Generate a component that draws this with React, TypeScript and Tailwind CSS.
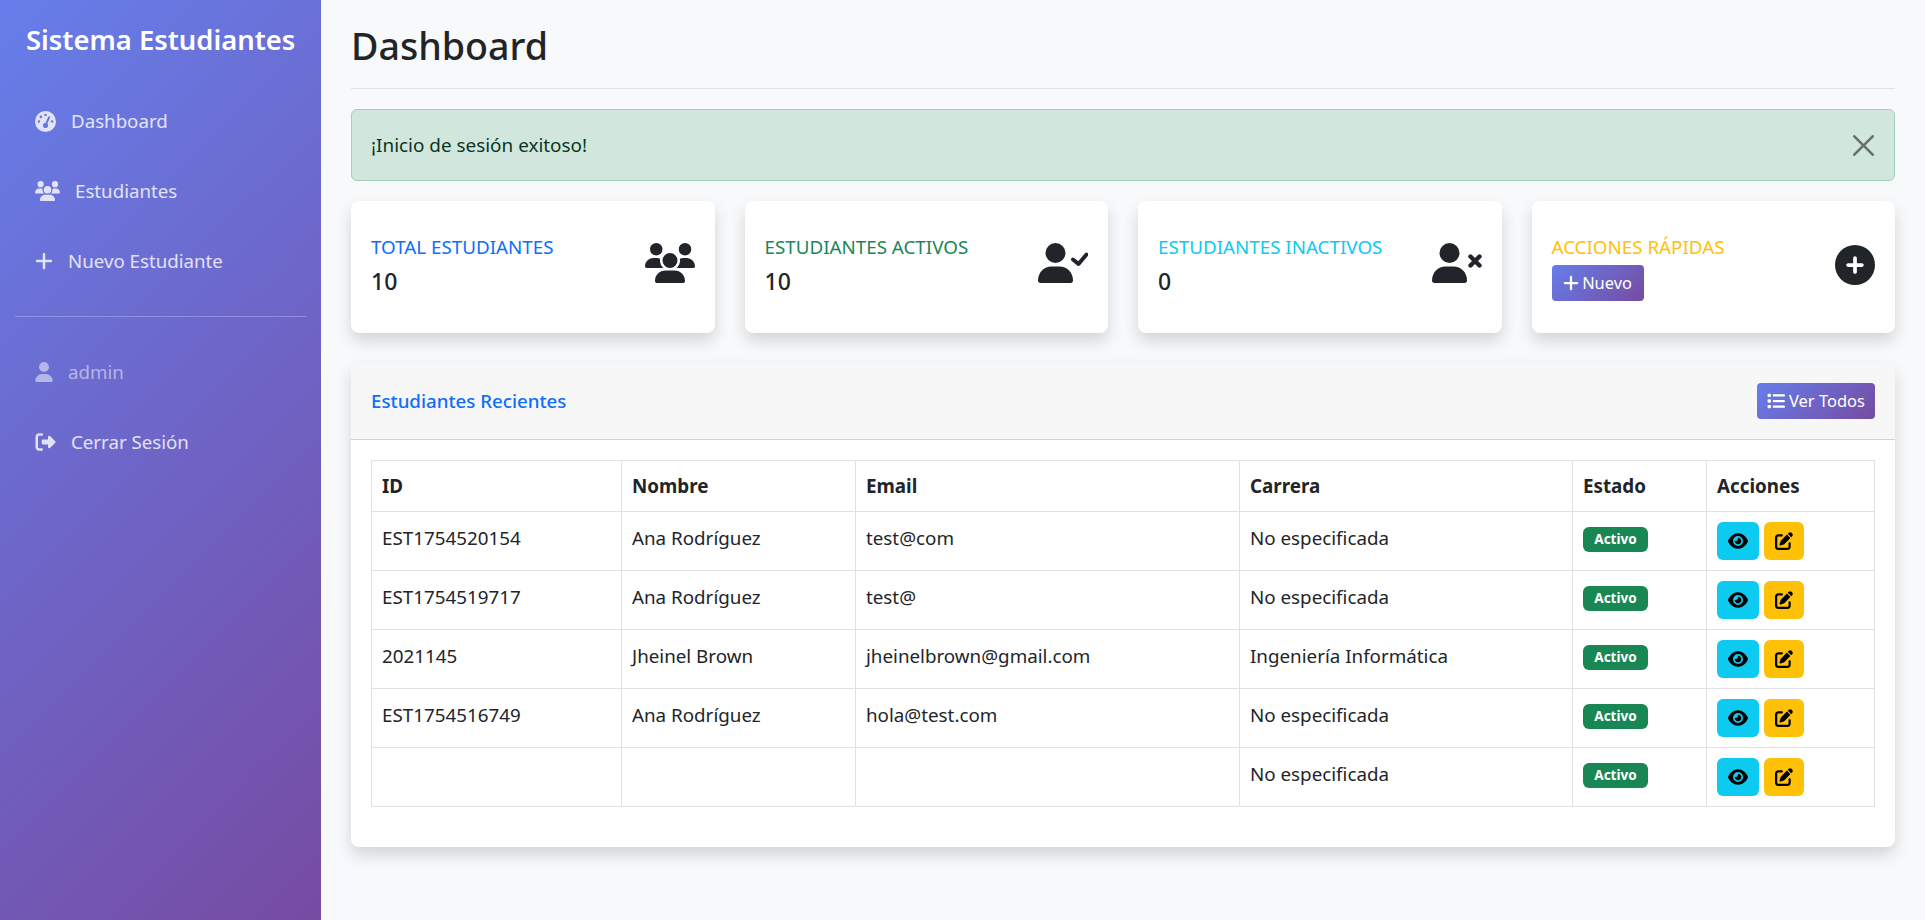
import React from "react";
import {
  FaGaugeHigh,
  FaUsers,
  FaPlus,
  FaUser,
  FaRightFromBracket,
  FaCirclePlus,
  FaList,
  FaEye,
  FaPenToSquare,
} from "react-icons/fa6";

const gradient = "bg-[linear-gradient(135deg,#667eea_0%,#764ba2_100%)]";

const students = [
  { id: "EST1754520154", name: "Ana Rodríguez", email: "test@com", career: "No especificada" },
  { id: "EST1754519717", name: "Ana Rodríguez", email: "test@", career: "No especificada" },
  { id: "2021145", name: "Jheinel Brown", email: "jheinelbrown@gmail.com", career: "Ingeniería Informática" },
  { id: "EST1754516749", name: "Ana Rodríguez", email: "hola@test.com", career: "No especificada" },
  { id: "", name: "", email: "", career: "No especificada" },
];

// person with a separated head and a small mark beside it
const PersonIcon: React.FC<{ children: React.ReactNode }> = ({ children }) => (
  <svg viewBox="0 0 50 40" className="w-[50px] h-[40px] mb-[8px]" fill="currentColor">
    <circle cx="17.5" cy="10" r="10" />
    <path d="M0 37.5C0 29.5 6 23.5 13.5 23.5h8C29 23.5 35 29.5 35 37.5c0 1.5-1 2.5-2.5 2.5h-30C1 40 0 39 0 37.5z" />
    {children}
  </svg>
);

const NavItem: React.FC<{
  icon: React.ReactNode;
  label: string;
  muted?: boolean;
}> = ({ icon, label, muted = false }) => (
  <a
    className={`flex items-center h-[70px] pl-[35px] gap-[15px] text-[18.7px] ${
      muted ? "text-white/50" : "text-white/80"
    }`}
  >
    {icon}
    <span>{label}</span>
  </a>
);

const StatCard: React.FC<{
  title: string;
  color: string;
  value?: string;
  icon: React.ReactNode;
  children?: React.ReactNode;
}> = ({ title, color, value, icon, children }) => (
  <div className="h-[132px] bg-white rounded-[8px] shadow-[0_8px_16px_rgba(0,0,0,0.15)] px-[20px] flex items-center justify-between">
    <div className="self-start pt-[32px]">
      <div className={`text-[18.8px] leading-[28px] mb-[4px] ${color}`}>{title}</div>
      {value && <div className="text-[23px] leading-[32px] font-medium text-[#212529]">{value}</div>}
      {children}
    </div>
    <div className="text-[#212529]">{icon}</div>
  </div>
);

export default function App() {
  return (
    <div className="flex min-h-[920px] bg-[#f8f9fa] font-['Noto_Sans',sans-serif] text-[#212529]">
      <aside className={`w-[321px] shrink-0 ${gradient}`}>
        <h4 className="h-[80px] pl-[26px] flex items-center text-[27.4px] font-semibold text-white">
          Sistema Estudiantes
        </h4>
        <nav className="pt-[6px]">
          <NavItem icon={<FaGaugeHigh className="w-[21px] h-[21px]" />} label="Dashboard" />
          <NavItem icon={<FaUsers className="w-[25px] h-[20px]" />} label="Estudiantes" />
          <NavItem icon={<FaPlus className="w-[18px] h-[20px]" />} label="Nuevo Estudiante" />
        </nav>
        <div className="mx-[15px] mt-[20px] mb-[20px] border-t border-white/25" />
        <NavItem muted icon={<FaUser className="w-[18px] h-[20px]" />} label="admin" />
        <NavItem icon={<FaRightFromBracket className="w-[21px] h-[20px]" />} label="Cerrar Sesión" />
      </aside>

      <main className="flex-1 pl-[30px] pr-[31px]">
        <div className="h-[89px] border-b border-[#dee2e6] flex items-center pt-[3px]">
          <h1 className="text-[37.6px] font-medium leading-[48px]">Dashboard</h1>
        </div>

        <div className="mt-[20px] h-[72px] rounded-[6px] bg-[#d1e7dd] border border-[#a3cfbb] text-[#0a3622] text-[18.9px] flex items-center justify-between pl-[19px] pr-[20px]">
          <span>¡Inicio de sesión exitoso!</span>
          <svg viewBox="0 0 16 16" className="w-[21px] h-[21px] fill-black opacity-50">
            <path d="M.293.293a1 1 0 0 1 1.414 0L8 6.586 14.293.293a1 1 0 1 1 1.414 1.414L9.414 8l6.293 6.293a1 1 0 0 1-1.414 1.414L8 9.414l-6.293 6.293a1 1 0 0 1-1.414-1.414L6.586 8 .293 1.707a1 1 0 0 1 0-1.414z" />
          </svg>
        </div>

        <div className="grid grid-cols-4 gap-[30px] mt-[20px]">
          <StatCard title="TOTAL ESTUDIANTES" color="text-[#0d6efd]" value="10" icon={<FaUsers className="w-[50px] h-[40px] mb-[8px]" />} />
          <StatCard
            title="ESTUDIANTES ACTIVOS"
            color="text-[#198754]"
            value="10"
            icon={
              <PersonIcon>
                <path d="M35 16.5l5.5 4.5L48.5 11.5" fill="none" stroke="currentColor" strokeWidth="4" strokeLinecap="round" strokeLinejoin="round" />
              </PersonIcon>
            }
          />
          <StatCard
            title="ESTUDIANTES INACTIVOS"
            color="text-[#0dcaf0]"
            value="0"
            icon={
              <PersonIcon>
                <path d="M38.5 13.5l9 9M47.5 13.5l-9 9" fill="none" stroke="currentColor" strokeWidth="4.4" strokeLinecap="round" />
              </PersonIcon>
            }
          />
          <StatCard title="ACCIONES RÁPIDAS" color="text-[#ffc107]" icon={<FaCirclePlus className="w-[40px] h-[40px] mb-[4px]" />}>
            <button className={`mt-[2px] h-[36px] w-[92px] rounded-[4px] text-white text-[16.4px] flex items-center justify-center gap-[3px] ${gradient}`}>
              <FaPlus className="w-[16px] h-[18px]" />
              Nuevo
            </button>
          </StatCard>
        </div>

        <section className="mt-[30px] h-[484px] bg-white rounded-[8px] shadow-[0_8px_16px_rgba(0,0,0,0.15)]">
          <header className="h-[77px] rounded-t-[8px] bg-[#f7f7f8] border-b border-[#d2d3d4] flex items-center justify-between px-[20px]">
            <h6 className="text-[18.7px] font-medium text-[#0d6efd]">Estudiantes Recientes</h6>
            <button className={`h-[36px] w-[118px] rounded-[4px] text-white text-[16.5px] flex items-center justify-center gap-[4px] ${gradient}`}>
              <FaList className="w-[18px] h-[18px]" />
              Ver Todos
            </button>
          </header>
          <div className="p-[20px]">
            <table className="w-[1503px] table-fixed border-collapse text-[18.8px]">
              <colgroup>
                <col className="w-[250px]" />
                <col className="w-[234px]" />
                <col className="w-[384px]" />
                <col className="w-[333px]" />
                <col className="w-[134px]" />
                <col className="w-[168px]" />
              </colgroup>
              <thead>
                <tr className="h-[51px] text-left">
                  {["ID", "Nombre", "Email", "Carrera", "Estado", "Acciones"].map((h) => (
                    <th key={h} className="border border-[#dee2e6] px-[10px] font-bold">
                      {h}
                    </th>
                  ))}
                </tr>
              </thead>
              <tbody>
                {students.map((s, i) => (
                  <tr key={i} className="h-[59px]">
                    <td className="border border-[#dee2e6] px-[10px] pt-[12px] align-top">{s.id}</td>
                    <td className="border border-[#dee2e6] px-[10px] pt-[12px] align-top">{s.name}</td>
                    <td className="border border-[#dee2e6] px-[10px] pt-[12px] align-top">{s.email}</td>
                    <td className="border border-[#dee2e6] px-[10px] pt-[12px] align-top">{s.career}</td>
                    <td className="border border-[#dee2e6] px-[10px] pt-[15px] align-top">
                      <span className="block w-[65px] h-[25px] rounded-[6px] bg-[#198754] text-white text-[13.5px] font-bold text-center leading-[24px]">
                        Activo
                      </span>
                    </td>
                    <td className="border border-[#dee2e6] px-[10px] pt-[10px] align-top">
                      <div className="flex gap-[5px]">
                        <button className="w-[42px] h-[38px] rounded-[6px] bg-[#0dcaf0] text-black flex items-center justify-center">
                          <FaEye className="w-[20px] h-[18px]" />
                        </button>
                        <button className="w-[40px] h-[38px] rounded-[6px] bg-[#ffc107] text-black flex items-center justify-center">
                          <FaPenToSquare className="w-[18px] h-[18px]" />
                        </button>
                      </div>
                    </td>
                  </tr>
                ))}
              </tbody>
            </table>
          </div>
        </section>
      </main>
    </div>
  );
}
